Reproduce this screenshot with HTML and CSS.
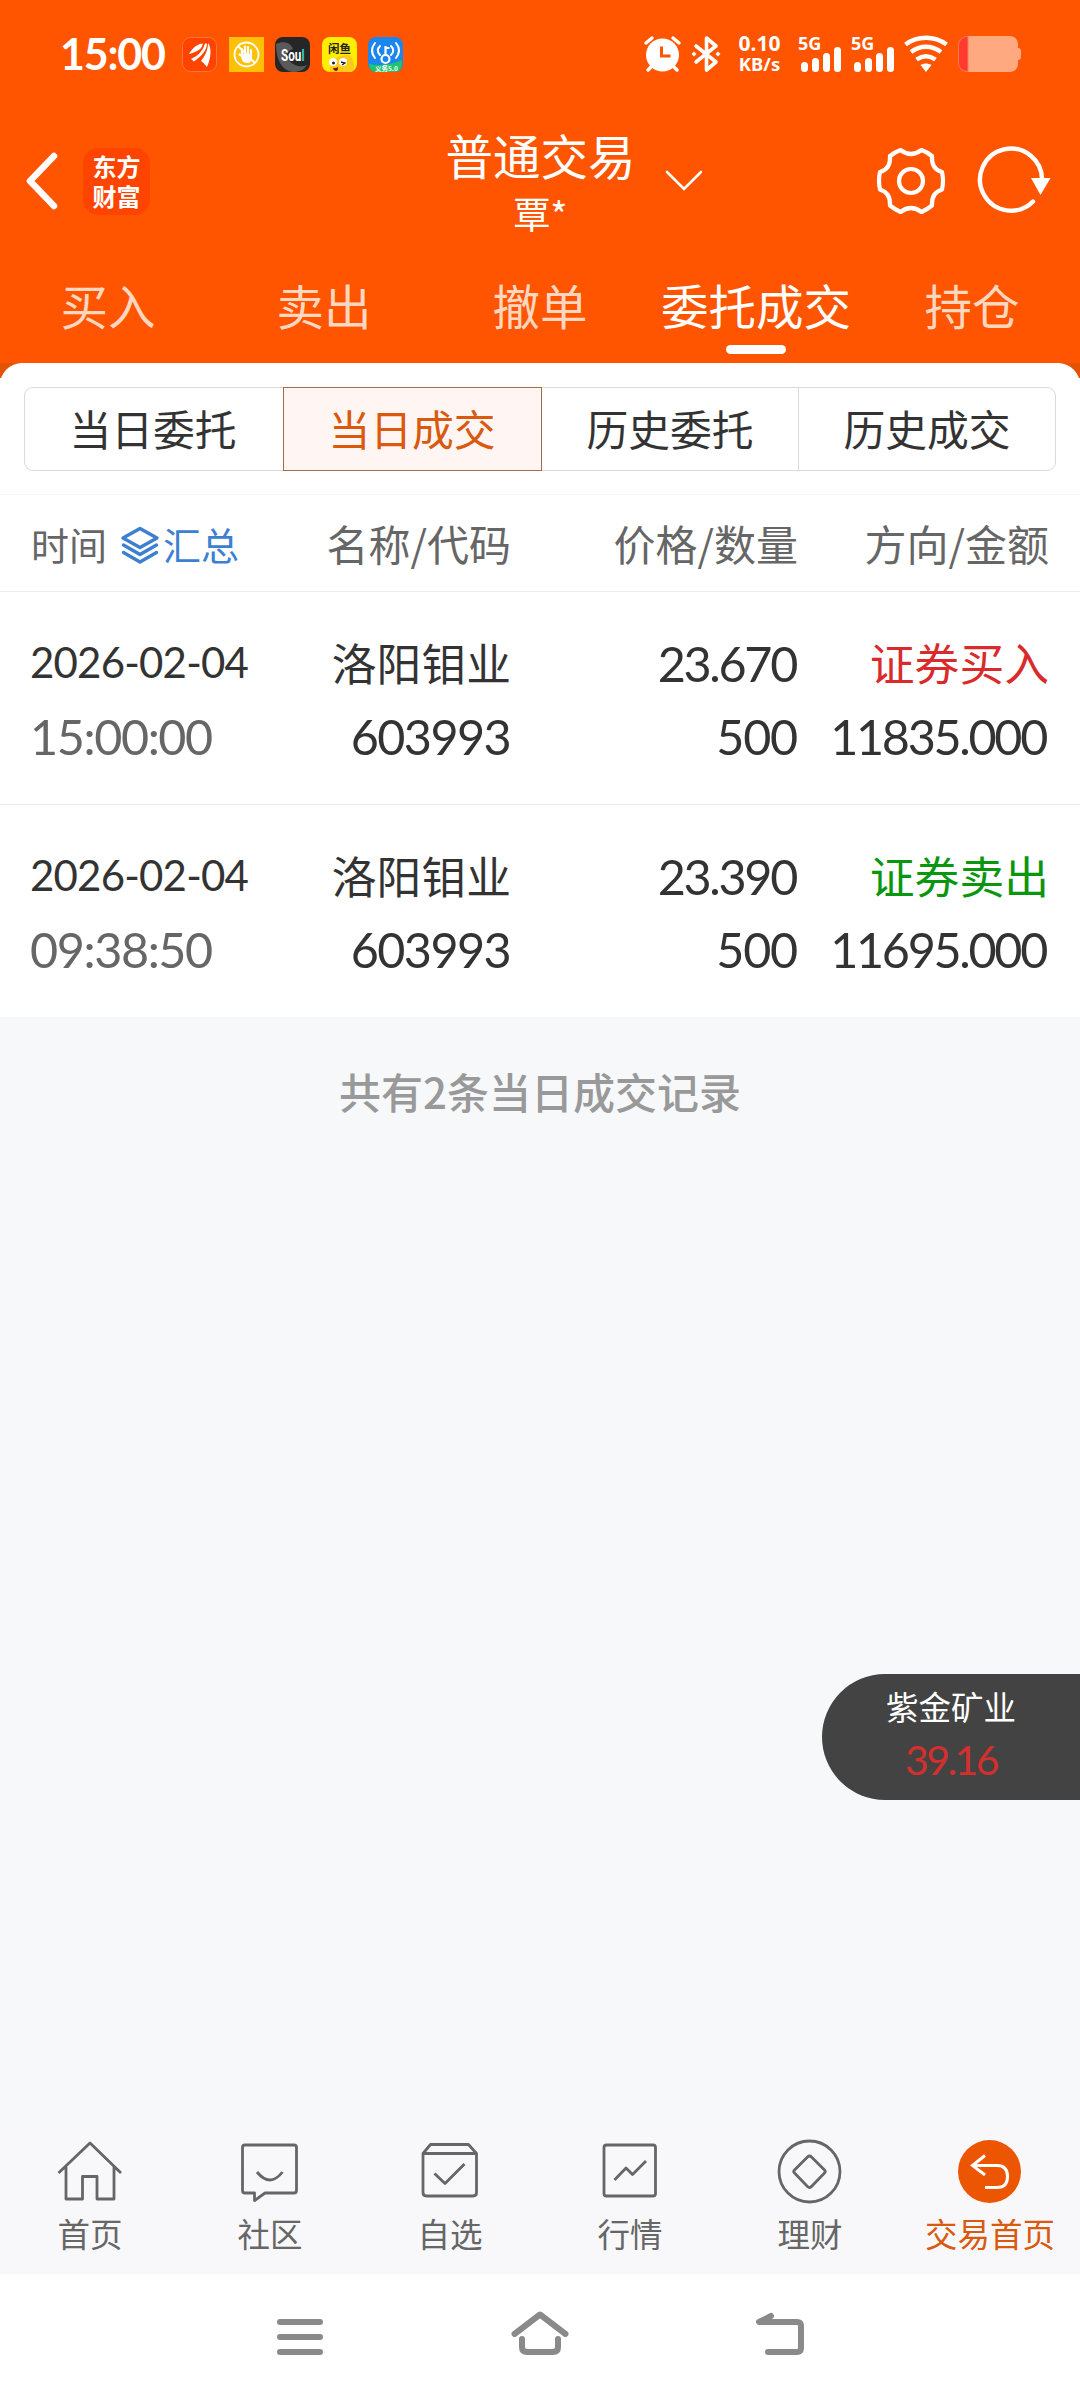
FILE: index.html
```html
<!DOCTYPE html>
<html lang="zh-CN">
<head>
    <meta charset="UTF-8">
    <meta name="viewport" content="width=device-width, initial-scale=1.0">
    <title>普通交易</title>
    <link rel="stylesheet" href="styles.css">
</head>
<body>
    <header class="top">
        <div class="status-bar">
            <span class="clock">15:00</span>
            <div class="app-icons">
                <svg viewBox="0 0 35 35">
                    <rect x=".5" y=".5" width="34" height="34" rx="8" fill="#ff4400" stroke="#ff7340"/>
                    <path d="M7 17C11 10 16 7 21 6.500c-1 4-3 6-5 7-4 2-6 3-9 3.500zM9 22c6-3 11-6 14-15.500l2 0c0 7-6 13-13 18zM19 24c4-5 7-11 7-18 4 5 3 15-1 24-2-2-3-4-6-6z" fill="#fff"/>
                </svg>
                <svg viewBox="0 0 35 35">
                    <rect width="35" height="35" fill="#ffc107"/>
                    <circle cx="17.500" cy="17.500" r="12" fill="none" stroke="#fff" stroke-width="1.800"/>
                    <path d="M9 9l17 17" stroke="#fff" stroke-width="1.800"/>
                    <path d="M13 19v-7M16 18v-8.500M19 18v-8M22 19v-6M13 19l-2.500-1.500" stroke="#fff" stroke-width="2.200" stroke-linecap="round"/>
                    <path d="M12 17h11v3c0 4-2 6-5 6-4 0-5-3-6-6z" fill="#fff"/>
                </svg>
                <svg viewBox="0 0 35 35">
                    <rect width="35" height="35" rx="8" fill="#262626"/>
                    <path d="M1 7c8-4 15-1 17 5-8 2-8 10 0 15 5 3 10 3 14 1-3 5-8 7-14 7C8 34 1 24 1 7z" fill="#5a5a5a"/>
                    <text x="6" y="24" class="soul" textLength="23.500" lengthAdjust="spacingAndGlyphs">Sou<tspan class="soul-l">l</tspan></text>
                </svg>
                <svg viewBox="0 0 35 35">
                    <rect width="35" height="35" rx="8" fill="#ffee00"/>
                    <path d="M8 35c-1-9 4-15 12-16 6-3 10 0 11 5 2 4 1 8-1 11z" fill="#ffc91a"/>
                    <circle cx="11" cy="25" r="4" fill="#fff"/>
                    <circle cx="21" cy="25" r="4" fill="#fff"/>
                    <circle cx="11.500" cy="26" r="1.500" fill="#222"/>
                    <path d="M19 25l4 1-3 2" stroke="#222" stroke-width="1.300" fill="none"/>
                    <path d="M11 31c2 0 4 0 5-1 1 5-4 5-5 1z" fill="#7c1a10"/>
                    <text x="6" y="16" class="xianyu">闲鱼</text>
                </svg>
                <svg viewBox="0 0 35 35">
                    <rect width="35" height="35" rx="8" fill="#1c86ee"/>
                    <path d="M1 27c10 2 22 1 33-4v4c0 5-3 8-8 8H9c-5 0-8-3-8-8z" fill="#1fc56c"/>
                    <circle cx="17.500" cy="22" r="4" fill="none" stroke="#fff" stroke-width="2.200"/>
                    <path d="M17.500 18V9M17.500 11h4" stroke="#fff" stroke-width="2.200"/>
                    <path d="M12 9c-3 3-3 6 0 9M7 6c-4 5-4 10 0 15M23 9c3 3 3 6 0 9M28 6c4 5 4 10 0 15" fill="none" stroke="#fff" stroke-width="2" stroke-linecap="round"/>
                    <text x="7" y="34" class="wifi-tag">义务5.0</text>
                </svg>
            </div>
            <div class="status-right">
                <svg class="alarm" viewBox="0 0 37 36">
                    <path d="M2 7l6-5M35 7l-6-5M4 34l5-5M33 34l-5-5" stroke="#fff" stroke-width="3.500" stroke-linecap="round"/>
                    <circle cx="18.500" cy="19" r="16.500" fill="#fff"/>
                    <path d="M17.500 10.500v9.500h9" fill="none" stroke="#ff5500" stroke-width="3"/>
                </svg>
                <svg class="bluetooth" viewBox="0 0 30 36">
                    <path d="M5 10l20 16-9.500 8V2L25 10 5 26" fill="none" stroke="#fff" stroke-width="3.600" stroke-linejoin="round" stroke-linecap="round"/>
                    <path d="M3 15.500l2.500 2.500L3 20.500.5 18zM27 15.500l2.500 2.500-2.500 2.500-2.500-2.500z" fill="#fff"/>
                </svg>
                <div class="net-speed"><span>0.10</span><span>KB/s</span></div>
                <div class="signal">
                    <span>5G</span>
                    <svg viewBox="0 0 42 25"><path d="M5.500 18.500v3M16.500 14.500v7M27.500 9.500v12M38.500 3.500v18" stroke="#fff" stroke-width="7" stroke-linecap="round"/></svg>
                </div>
                <div class="signal">
                    <span>5G</span>
                    <svg viewBox="0 0 42 25"><path d="M5.500 18.500v3M16.500 14.500v7M27.500 9.500v12M38.500 3.500v18" stroke="#fff" stroke-width="7" stroke-linecap="round"/></svg>
                </div>
                <svg class="wifi" viewBox="0 0 44 36">
                    <path d="M1.500 8.500c12-9 29-9 41 0M7 16c9-7 21-7 30 0M12.500 23.500c6-4 13-4 19 0" fill="none" stroke="#fff" stroke-width="4.500"/>
                    <path d="M16.500 29c4-2 7-2 11 0L22 36z" fill="#fff"/>
                </svg>
                <svg class="battery" viewBox="0 0 63 36">
                    <path d="M10 0h42a8 8 0 0 1 8 8v4q3 0 3 3v6q0 3-3 3v4a8 8 0 0 1-8 8H10z" fill="#ffa980"/>
                    <path d="M10 .5H9a8.500 8.500 0 0 0-8.500 8.500v18A8.500 8.500 0 0 0 9 35.500h1z" fill="#ff3b30" stroke="#ff7a50"/>
                </svg>
            </div>
        </div>

        <div class="nav-bar">
            <div class="nav-left">
                <svg class="back" viewBox="0 0 34 58"><path d="M29 4L5 29l24 25" fill="none" stroke="#fff" stroke-width="6.500" stroke-linecap="round" stroke-linejoin="round"/></svg>
                <div class="brand"><span>东方</span><span>财富</span></div>
            </div>
            <div class="account">
                <div class="account-name">
                    <span class="title">普通交易</span>
                    <span class="user">覃*</span>
                </div>
                <svg class="arrow-down" viewBox="0 0 38 22"><path d="M2 2l17 17L36 2" fill="none" stroke="#fff" stroke-width="2.600" stroke-linecap="round"/></svg>
            </div>
            <div class="nav-right">
                <svg class="gear" viewBox="0 0 68 68">
                    <path d="M23.500 3Q34 11 44.500 3Q50 5 55 9Q54 22 65 25Q67 34 65 42.500Q54 46 55 58.500Q50 62.500 44.500 65Q34 57 23.500 65Q18 62.500 13 58.500Q14 46 3 42.500Q1 34 3 25Q14 22 13 9Q18 5 23.500 3z" fill="none" stroke="#fff" stroke-width="4.200" stroke-linejoin="round"/>
                    <circle cx="34" cy="34" r="12" fill="none" stroke="#fff" stroke-width="4.200"/>
                </svg>
                <svg class="refresh" viewBox="0 0 74 68">
                    <path d="M65 34A31 31 0 1 0 56 54.500" fill="none" stroke="#fff" stroke-width="4.400" stroke-linecap="round"/>
                    <path d="M54 31h19.500L63.500 48z" fill="#fff"/>
                </svg>
            </div>
        </div>

        <nav class="tabs">
            <a class="tab">买入</a>
            <a class="tab">卖出</a>
            <a class="tab">撤单</a>
            <a class="tab active">委托成交</a>
            <a class="tab">持仓</a>
        </nav>
    </header>

    <main>
        <div class="panel-wrap">
            <div class="panel">
                <div class="segment">
                    <div class="seg">当日委托</div>
                    <div class="seg active">当日成交</div>
                    <div class="seg">历史委托</div>
                    <div class="seg">历史成交</div>
                </div>
            </div>
        </div>

        <div class="grid-row list-head">
            <div class="head-time">
                <span>时间</span>
                <svg viewBox="0 0 38 38">
                    <path d="M19 2.500L36 12 19 21.500 2 12z" fill="none" stroke="#3d7fd1" stroke-width="3.400" stroke-linejoin="round"/>
                    <path d="M2.500 19L19 28.500 35.500 19M2.500 26.500L19 36l16.500-9.500" fill="none" stroke="#3d7fd1" stroke-width="3.400" stroke-linecap="round" stroke-linejoin="round"/>
                </svg>
                <span class="summary">汇总</span>
            </div>
            <div>名称/代码</div>
            <div>价格/数量</div>
            <div>方向/金额</div>
        </div>

        <div class="grid-row record">
            <div class="cell left"><span class="date">2026-02-04</span><span class="num time">15:00:00</span></div>
            <div class="cell"><span>洛阳钼业</span><span class="num code">603993</span></div>
            <div class="cell"><span class="num price">23.670</span><span class="num">500</span></div>
            <div class="cell"><span class="buy">证券买入</span><span class="num amount">11835.000</span></div>
        </div>
        <div class="grid-row record">
            <div class="cell left"><span class="date">2026-02-04</span><span class="num time">09:38:50</span></div>
            <div class="cell"><span>洛阳钼业</span><span class="num code">603993</span></div>
            <div class="cell"><span class="num price">23.390</span><span class="num">500</span></div>
            <div class="cell"><span class="sell">证券卖出</span><span class="num amount">11695.000</span></div>
        </div>

        <p class="total">共有2条当日成交记录</p>
    </main>

    <aside class="float-quote">
        <span>紫金矿业</span>
        <span class="quote-price">39.16</span>
    </aside>

    <footer class="tab-bar">
        <a class="bar-item">
            <svg viewBox="0 0 72 72"><path d="M4.500 38L36 8l31 30M12 32v32h16.500V41.500H43V64h17V32"/></svg>
            <span>首页</span>
        </a>
        <a class="bar-item">
            <svg viewBox="0 0 72 72"><path d="M11 10h49q2.500 0 2.500 2.500v43q0 2.500-2.500 2.500H31l-10.500 7.500V58H11q-2.500 0-2.500-2.500v-43Q8.500 10 11 10zM23 37q13 16 25.500 0"/></svg>
            <span>社区</span>
        </a>
        <a class="bar-item">
            <svg viewBox="0 0 72 72"><path d="M9 18.500L16.500 9.500h38l8 9v39q0 3.500-3.500 3.500H12.500Q9 61 9 57.500zM9 18.500h53.500M20.500 38.500l10.500 10L50.500 29"/></svg>
            <span>自选</span>
        </a>
        <a class="bar-item">
            <svg viewBox="0 0 72 72"><rect x="10" y="10" width="51.500" height="51" rx="2.500"/><path d="M20.500 45L32 33l6.500 6.500L52 26"/></svg>
            <span>行情</span>
        </a>
        <a class="bar-item">
            <svg viewBox="0 0 72 72"><circle cx="35.500" cy="36.500" r="30.500"/><path d="M33.500 22q2-2 4 0L50.500 35q1.500 1.500 0 3L37.500 51.500q-2 2-4 0L20.500 38q-1.500-1.500 0-3z"/></svg>
            <span>理财</span>
        </a>
        <a class="bar-item active">
            <svg viewBox="0 0 72 72"><circle class="disc" cx="35.500" cy="36.500" r="31.500"/><path class="turn" d="M31 20.500L18.500 30.500 31 40M18.500 30.500H43q10.500 0 10.500 11T43 52.500H31"/></svg>
            <span>交易首页</span>
        </a>
    </footer>

    <div class="system-bar">
        <svg viewBox="0 0 60 48"><path d="M10 9h40M10 24h40M10 39h40"/></svg>
        <svg viewBox="0 0 60 48"><path d="M4.500 21L30 1.500 55.500 21M12 26v8q0 5 5 5h26q5 0 5-5v-8"/></svg>
        <svg viewBox="0 0 60 48"><path d="M21 3L9 9h38q4 0 4 4v22q0 4-4 4H18"/></svg>
    </div>
</body>
</html>
```
FILE: styles.css
```css
* {
    box-sizing: border-box;
}
body {
    margin: 0;
    width: 1080px;
    height: 2400px;
    display: flex;
    flex-direction: column;
    overflow: hidden;
    position: relative;
    font-family: "Noto Sans CJK SC", sans-serif;
    color: #333;
    background: #f7f8fa;
}
svg {
    display: block;
    flex: none;
    overflow: visible;
}

/* header */
.top {
    height: 363px;
    background: #ff5500;
    color: #fff;
}
.status-bar {
    height: 108px;
    padding: 0 60px 0 60px;
    display: flex;
    align-items: center;
}
.clock {
    width: 122px;
    font-family: Lato, sans-serif;
    font-size: 43px;
    font-weight: 700;
    letter-spacing: -1.2px;
    line-height: 50px;
}
.app-icons {
    display: flex;
    gap: 11.5px;
}
.app-icons svg {
    width: 35px;
    height: 35px;
}
.soul {
    font: bold 17px Roboto, sans-serif;
    fill: #fff;
}
.soul-l {
    fill: #2ad5c4;
}
.xianyu {
    font-size: 11.5px;
    font-weight: 700;
    fill: #222;
}
.wifi-tag {
    font-size: 6.5px;
    font-weight: 700;
    fill: #fff;
}
.status-right {
    margin-left: auto;
    display: flex;
    align-items: center;
}
.alarm {
    width: 37px;
    height: 36px;
}
.bluetooth {
    width: 30px;
    height: 36px;
    margin-left: 10px;
}
.net-speed {
    width: 43px;
    margin-left: 17px;
    margin-right: 1px;
    display: flex;
    flex-direction: column;
    font-family: "Noto Sans", sans-serif;
    font-weight: 700;
    font-size: 21px;
    line-height: 20px;
    text-align: center;
    white-space: nowrap;
}
.net-speed span:last-child {
    font-size: 18.5px;
    line-height: 22px;
}
.signal {
    width: 42px;
    height: 36px;
    margin-left: 17px;
    position: relative;
}
.signal + .signal {
    margin-left: 11px;
}
.signal span {
    position: absolute;
    left: -1px;
    top: -2px;
    font-family: "Noto Sans", sans-serif;
    font-size: 18px;
    font-weight: 700;
    line-height: 18px;
}
.signal svg {
    width: 42px;
    height: 25px;
    margin-top: 11px;
}
.wifi {
    width: 44px;
    height: 36px;
    margin-left: 10px;
}
.battery {
    width: 63px;
    height: 36px;
    margin-left: 10px;
    margin-right: -1px;
}

.nav-bar {
    height: 146px;
    padding: 0 29px 0 25px;
    display: grid;
    grid-template-columns: 1fr auto 1fr;
    align-items: center;
}
.nav-left {
    display: flex;
    align-items: center;
    gap: 24px;
}
.back {
    width: 34px;
    height: 58px;
}
.brand {
    width: 67px;
    height: 67px;
    border-radius: 15px;
    background: #ff4400;
    display: flex;
    flex-direction: column;
    align-items: center;
    justify-content: center;
    font-size: 24px;
    font-weight: 700;
    line-height: 30px;
}
.account {
    width: 185px;
    display: flex;
    align-items: center;
    gap: 29px;
}
.account-name {
    flex: none;
    display: flex;
    flex-direction: column;
    align-items: center;
}
.title {
    font-size: 47.5px;
    line-height: 64px;
}
.user {
    font-size: 37px;
    line-height: 52px;
}
.arrow-down {
    width: 38px;
    height: 22px;
}
.nav-right {
    display: flex;
    justify-content: flex-end;
    gap: 32px;
}
.gear {
    width: 68px;
    height: 68px;
}
.refresh {
    width: 74px;
    height: 68px;
}

.tabs {
    display: flex;
    height: 109px;
}
.tab {
    flex: 1;
    display: flex;
    flex-direction: column;
    align-items: center;
    padding-top: 17px;
    font-size: 47.5px;
    line-height: 68px;
    color: #ffd6bf;
}
.tab.active {
    color: #fff;
}
.tab.active::after {
    content: "";
    width: 60px;
    height: 9px;
    margin-top: 6px;
    border-radius: 4.5px;
    background: #fff;
}

/* records */
main {
    flex: 1;
}
.panel-wrap {
    background: linear-gradient(#e35205 15px, #fff 15px);
}
.panel {
    padding: 24px 24px 22px;
    background: #fff;
    border-radius: 22px 22px 0 0;
    border-bottom: 1px solid #f5f5f5;
}
.segment {
    display: flex;
    height: 84px;
    margin-bottom: 1px;
}
.seg {
    flex: 1;
    display: flex;
    align-items: center;
    justify-content: center;
    padding-bottom: 2px;
    font-size: 41.8px;
    line-height: 60px;
    border: 1px solid #d8dada;
}
.seg:first-child {
    padding-right: 2px;
    border-right: none;
    border-radius: 9px 0 0 9px;
}
.seg:last-child {
    border-radius: 0 9px 9px 0;
}
.seg.active {
    padding-right: 1px;
    color: #d9590f;
    background: #fff5f2;
    border-color: #a8694b;
}
.seg.active + .seg {
    border-left: none;
    border-right: none;
}
.grid-row {
    display: grid;
    grid-template-columns: 300px 211px 287px 251px;
    background: #fff;
    border-bottom: 1px solid #ebebeb;
    text-align: right;
}
.list-head {
    height: 97px;
    padding-bottom: 2px;
    align-items: center;
    font-size: 42px;
    color: #666;
}
.head-time {
    display: flex;
    align-items: center;
    padding: 2px 0 0 31px;
    font-size: 38px;
}
.head-time svg {
    width: 38px;
    height: 38px;
    margin: 3px 4px 0 14px;
}
.summary {
    color: #3d7fd1;
}
.record {
    height: 213px;
    padding-top: 33px;
    font-size: 44.8px;
}
.record:last-of-type {
    border-bottom: none;
    height: 212px;
}
.cell {
    display: flex;
    flex-direction: column;
    align-items: flex-end;
}
.cell span {
    height: 73px;
    line-height: 73px;
    white-space: nowrap;
}
.cell.left {
    align-items: flex-start;
    padding-left: 30px;
}
.cell .num {
    padding-right: 1px;
    font-family: Lato, sans-serif;
    font-size: 48.5px;
    line-height: 76px;
    letter-spacing: -1.2px;
}
.cell .date {
    font-family: Lato, sans-serif;
    font-size: 42px;
    line-height: 75px;
    letter-spacing: -0.8px;
}
.cell .time {
    color: #666;
    letter-spacing: -1.4px;
}
.cell .code {
    letter-spacing: -1.6px;
}
.cell .price {
    padding-right: 2px;
    letter-spacing: -2.3px;
}
.cell .amount {
    padding-right: 3px;
    letter-spacing: -2.3px;
}
.buy {
    color: #d92b2b;
}
.sell {
    color: #0a960f;
}
.total {
    margin: 43px 0 0;
    text-align: center;
    font-size: 42px;
    font-weight: 500;
    line-height: 62px;
    color: #999;
}

/* floating quote sits over the page at the right edge */
.float-quote {
    position: absolute;
    right: 0;
    top: 1674px;
    width: 258px;
    height: 126px;
    padding-top: 6px;
    border-radius: 63px 0 0 63px;
    background: #434343;
    color: #fff;
    display: flex;
    flex-direction: column;
    align-items: center;
    font-size: 32.5px;
    line-height: 52px;
}
.quote-price {
    font-family: Lato, sans-serif;
    font-size: 41px;
    letter-spacing: -2.6px;
    line-height: 56px;
    color: #d2302e;
}

/* bottom bars */
.tab-bar {
    height: 154px;
    padding-top: 15px;
    display: flex;
    background: #f8f8fa;
}
.bar-item {
    flex: 1;
    display: flex;
    flex-direction: column;
    align-items: center;
    font-size: 32.5px;
    line-height: 48px;
    color: #666;
}
.bar-item svg {
    width: 72px;
    height: 72px;
    margin-bottom: 2px;
    fill: none;
    stroke: #666;
    stroke-width: 2.8px;
    stroke-linejoin: round;
}
.bar-item.active {
    color: #d9590f;
}
.bar-item .disc {
    fill: #ec5502;
    stroke: none;
}
.bar-item .turn {
    stroke: #fff;
    stroke-width: 3px;
    stroke-linejoin: miter;
}
.system-bar {
    height: 126px;
    padding: 39px 180px 0;
    display: flex;
    background: #fff;
}
.system-bar svg {
    width: 60px;
    height: 48px;
    margin: 0 90px;
    fill: none;
    stroke: #8a8a8a;
    stroke-width: 6px;
    stroke-linecap: round;
    stroke-linejoin: round;
}
```
